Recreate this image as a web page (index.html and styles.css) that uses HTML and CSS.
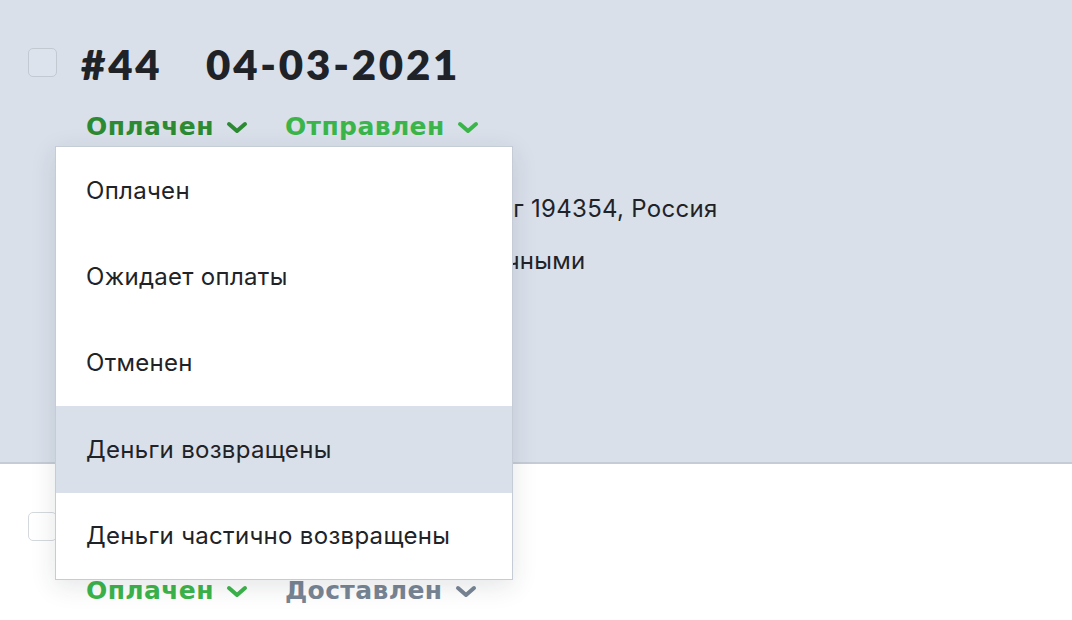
FILE: index.html
```html
<!DOCTYPE html>
<html lang="ru">
<head>
    <meta charset="UTF-8">
    <meta name="viewport" content="width=device-width, initial-scale=1.0">
    <title>Заказы</title>
    <link rel="stylesheet" href="styles.css">
</head>
<body>
    <div class="orders">
        <div class="order order-active">
            <div class="order-head">
                <span class="checkbox"></span>
                <h2 class="order-title">#44&nbsp;&nbsp; 04-03-2021</h2>
            </div>
            <div class="statuses">
                <div class="status-wrap">
                    <span class="status status-paid">Оплачен
                        <svg class="chevron" viewBox="0 0 22 14" width="22" height="14"><path d="M3 4l8 7 8-7"/></svg>
                    </span>
                    <ul class="dropdown">
                        <li class="dropdown-item">Оплачен</li>
                        <li class="dropdown-item">Ожидает оплаты</li>
                        <li class="dropdown-item">Отменен</li>
                        <li class="dropdown-item selected">Деньги возвращены</li>
                        <li class="dropdown-item">Деньги частично возвращены</li>
                    </ul>
                </div>
                <span class="status status-sent">Отправлен
                    <svg class="chevron" viewBox="0 0 22 14" width="22" height="14"><path d="M3 4l8 7 8-7"/></svg>
                </span>
            </div>
            <div class="order-info">
                <p>Ул. Садовая, д. 12, Санкт-Петербург 194354, Россия</p>
                <p>Курьерская доставка, оплата наличными</p>
            </div>
        </div>
        <div class="order">
            <div class="order-head">
                <span class="checkbox"></span>
                <h2 class="order-title">#43&nbsp;&nbsp; 03-03-2021</h2>
            </div>
            <div class="statuses">
                <span class="status status-ok">Оплачен
                    <svg class="chevron" viewBox="0 0 22 14" width="22" height="14"><path d="M3 4l8 7 8-7"/></svg>
                </span>
                <span class="status status-done">Доставлен
                    <svg class="chevron" viewBox="0 0 22 14" width="22" height="14"><path d="M3 4l8 7 8-7"/></svg>
                </span>
            </div>
        </div>
    </div>
</body>
</html>
```

FILE: styles.css
```css
body {
    margin: 0;
    font-family: Inter, "Noto Sans", sans-serif;
    color: #1f2328;
    background-color: #fff;
}
.order {
    padding: 48px 28px 40px;
    background-color: #fff;
}
.order-active {
    background-color: #d9e0ea;
    border-bottom: 2px solid #c5ccd5;
    height: 374px;
}
.order-head {
    display: flex;
    align-items: flex-start;
    gap: 24px;
}
.checkbox {
    width: 27px;
    height: 27px;
    border: 1px solid #c3c9d1;
    border-radius: 5px;
    background-color: #fff;
    opacity: 0.7;
    flex-shrink: 0;
}
.order-active .checkbox {
    background-color: #dde3ec;
    opacity: 1;
}
.order-title {
    margin: 0;
    font-family: Lato, "Open Sans", sans-serif;
    font-weight: 800;
    font-size: 42px;
    line-height: 32px;
    letter-spacing: 2.8px;
    word-spacing: 2px;
    color: #1f2328;
}
.statuses {
    display: flex;
    gap: 37px;
    margin-top: 32px;
    margin-left: 58px;
}
.status-wrap {
    position: relative;
}
.status {
    display: inline-flex;
    align-items: center;
    gap: 12px;
    font-family: "DejaVu Sans", sans-serif;
    font-weight: 700;
    font-size: 25px;
    line-height: 30px;
    letter-spacing: 0.4px;
}
.chevron {
    fill: none;
    stroke: currentColor;
    stroke-width: 4;
    stroke-linecap: round;
    stroke-linejoin: round;
}
.status-paid {
    color: #2c8a33;
}
.status-sent,
.status-ok {
    color: #3bb54a;
}
.status-done {
    color: #788595;
}
.dropdown {
    position: absolute;
    top: 34px;
    left: -31px;
    width: 456px;
    margin: 0;
    padding: 0;
    list-style: none;
    background-color: #fff;
    border: 1px solid #c5ccd5;
    box-shadow: 0 6px 24px rgba(30, 40, 60, 0.12);
    z-index: 10;
}
.dropdown-item {
    height: 86.4px;
    display: flex;
    align-items: center;
    padding-left: 30px;
    font-size: 24px;
    letter-spacing: 0.3px;
    color: #1f2328;
}
.dropdown-item.selected {
    background-color: #d9e0ea;
}
.order-info {
    margin-left: 58px;
    margin-top: 52px;
}
.order-info p {
    margin: 0 0 22px;
    font-size: 24px;
    line-height: 30px;
    letter-spacing: 0.3px;
}
```
